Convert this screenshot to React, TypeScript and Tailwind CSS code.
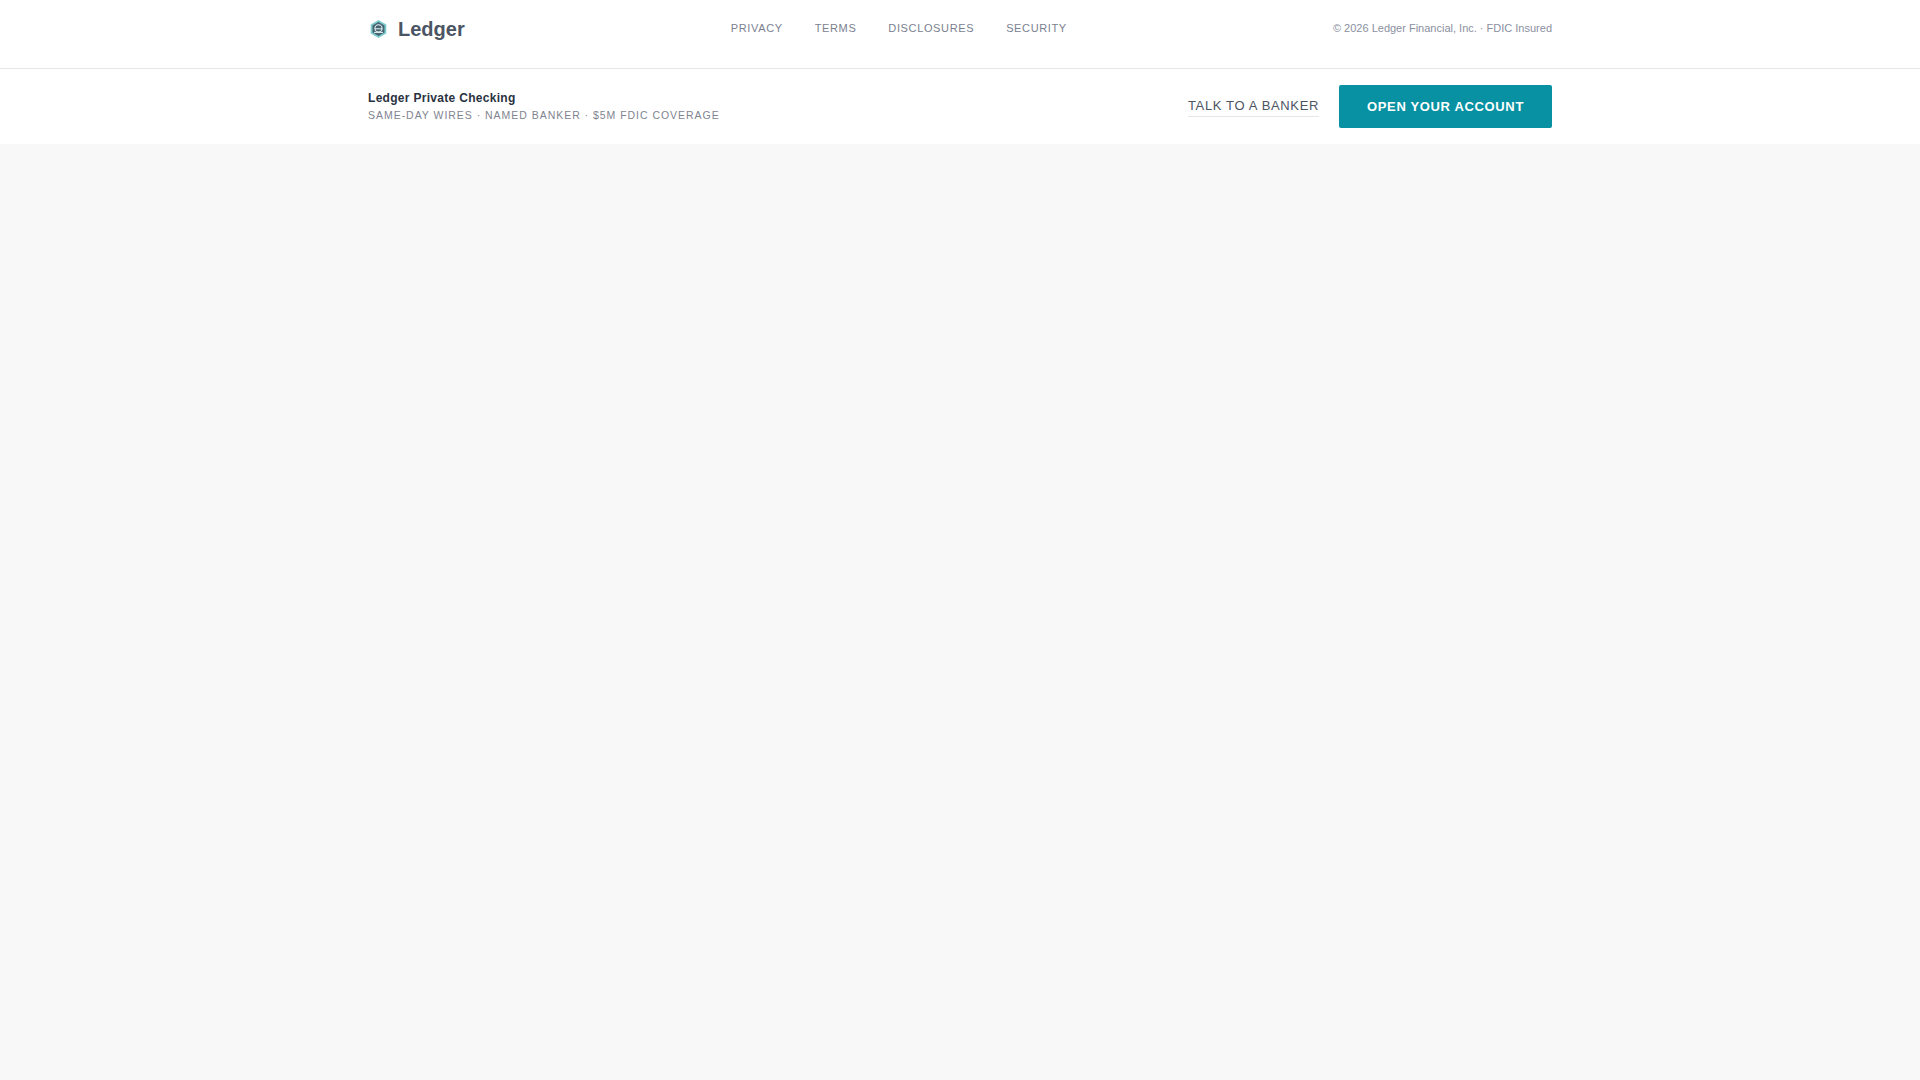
const sans = 'font-["Liberation_Sans",Arial,sans-serif]'

function LedgerMark() {
  return (
    <svg width="20" height="20" viewBox="0 0 20 20" className="shrink-0">
      <path d="M10.5 1 L18.3 5.5 V14.5 L10.5 19 L2.7 14.5 V5.5 Z" fill="#5fbfc0" opacity="0.8" />
      <path d="M10.5 3 L16.5 6.5 V13.5 L10.5 17 L4.5 13.5 V6.5 Z" fill="#46626f" />
      <circle cx="10.5" cy="9.4" r="3.6" fill="none" stroke="#e6f4f5" strokeWidth="1.1" />
      <path d="M7 9.8 H14 M6 13.4 H15" stroke="#e6f4f5" strokeWidth="1" />
    </svg>
  )
}

const navLinks = ['PRIVACY', 'TERMS', 'DISCLOSURES', 'SECURITY']

export default function App() {
  return (
    <div className={`min-h-screen bg-[#f8f8f8] ${sans}`}>
      <header className="h-[69px] bg-white border-b border-[#e5e7eb]">
        <div className="mx-auto w-[1184px] h-[57px] flex items-center justify-between">
          <a className="flex items-center gap-[10px]">
            <LedgerMark />
            <span className="text-[20px] leading-7 font-bold text-[#4b5563]">Ledger</span>
          </a>
          <nav className="flex gap-8 pb-[2px]">
            {navLinks.map((link) => (
              <a key={link} className="text-[11px] leading-4 tracking-[0.63px] text-[#7b8190]">
                {link}
              </a>
            ))}
          </nav>
          <p className="pb-[2px] text-[11px] leading-4 text-[#8b90a0]">© 2026 Ledger Financial, Inc. · FDIC Insured</p>
        </div>
      </header>
      <div className="h-[75px] bg-white">
        <div className="mx-auto w-[1184px] h-full flex items-center justify-between">
          <div>
            <div className="text-[12px] leading-4 font-bold tracking-[0.3px] text-[#2a3240]">Ledger Private Checking</div>
            <div className="mt-px text-[10.5px] leading-4 tracking-[0.97px] text-[#7f8490]">
              SAME-DAY WIRES · NAMED BANKER · $5M FDIC COVERAGE
            </div>
          </div>
          <div className="flex items-center gap-5">
            <a className="pt-[2px] pb-[2px] border-b border-[#e5e7eb] text-[13px] leading-4 tracking-[0.65px] text-[#4b5563]">
              TALK TO A BANKER
            </a>
            <button className="w-[213px] h-[43px] rounded-[2px] bg-[#0891a2] text-[13px] font-bold tracking-[0.65px] text-white">
              OPEN YOUR ACCOUNT
            </button>
          </div>
        </div>
      </div>
    </div>
  )
}
